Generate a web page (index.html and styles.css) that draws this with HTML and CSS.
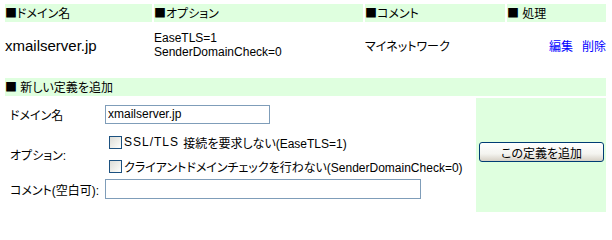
FILE: index.html
```html
<!DOCTYPE html>
<html lang="ja">
<head>
<meta charset="utf-8">
<link rel="stylesheet" href="styles.css">
</head>
<body>
<div class="list">
  <div class="hcell"><span class="sq">■</span>ドメイン名</div>
  <div class="hcell"><span class="sq">■</span>オプション</div>
  <div class="hcell"><span class="sq">■</span>コメント</div>
  <div class="hcell"><span class="sq">■</span> 処理</div>
  <div class="dcell domain">xmailserver.jp</div>
  <div class="dcell opts">EaseTLS=1<br>SenderDomainCheck=0</div>
  <div class="dcell">マイネットワーク</div>
  <div class="dcell actions"><a href="#">編集</a><a href="#">削除</a></div>
</div>
<div class="section"><span class="sq">■</span> 新しい定義を追加</div>
<div class="form">
  <div class="fields">
    <div class="row r1">
      <span class="label">ドメイン名</span>
      <input class="text short" type="text" value="xmailserver.jp">
    </div>
    <div class="row r2">
      <span class="label">オプション:</span>
      <div class="checks">
        <label class="check"><input type="checkbox"><span class="ascii">SSL/TLS </span>接続を要求しない(EaseTLS=1)</label>
        <label class="check"><input type="checkbox">クライアントドメインチェックを行わない(SenderDomainCheck=0)</label>
      </div>
    </div>
    <div class="row r3">
      <span class="label">コメント(空白可):</span>
      <input class="text long" type="text" value="">
    </div>
  </div>
  <div class="submit">
    <button class="btn" type="button">この定義を追加</button>
  </div>
</div>
</body>
</html>
```
FILE: styles.css
```css
body {
  margin: 0;
  padding: 4px 0 0 5px;
  width: 601px;
  font-family: "Liberation Sans", "Noto Sans CJK JP", sans-serif;
  font-size: 12px;
  color: #000;
  background: #fff;
  font-feature-settings: "palt";
}
.sq {
  font-family: "Noto Sans CJK JP", sans-serif;
  font-feature-settings: normal;
}
.list {
  display: grid;
  grid-template-columns: 147px 209px 140px 99px;
  column-gap: 2px;
  row-gap: 2px;
}
.hcell {
  background: #dfffdf;
  height: 18px;
  line-height: 18px;
  white-space: nowrap;
}
.dcell {
  height: 42px;
  display: flex;
  align-items: center;
  white-space: nowrap;
}
.domain { font-size: 15px; }
.opts { line-height: 14px; }
.actions {
  justify-content: flex-end;
  gap: 9px;
}
.actions a {
  color: #0000ff;
  text-decoration: none;
}
.section {
  margin-top: 12px;
  background: #dfffdf;
  height: 18px;
  line-height: 18px;
}
.form {
  margin-top: 2px;
  display: grid;
  grid-template-columns: 469px 130px;
  column-gap: 2px;
}
.fields {
  display: flex;
  flex-direction: column;
  padding-bottom: 12px;
}
.row {
  display: flex;
  align-items: center;
}
.r1 { height: 32px; }
.r2 { height: 48px; }
.r3 { height: 22px; }
.label {
  width: 100px;
  padding-left: 5px;
  box-sizing: border-box;
  white-space: nowrap;
}
.text {
  box-sizing: border-box;
  margin: 0;
  border: 1px solid #7f9db9;
  padding: 0 2px;
  font-family: "Liberation Sans", sans-serif;
  font-size: 12px;
  color: #000;
  background: #fff;
  outline: none;
}
.short { width: 165px; height: 19px; }
.long { width: 316px; height: 20px; }
.checks {
  display: flex;
  flex-direction: column;
  padding-left: 4px;
}
.check {
  height: 24px;
  display: flex;
  align-items: center;
  white-space: nowrap;
}
.ascii {
  letter-spacing: 1px;
  white-space: pre;
}
.check input {
  appearance: none;
  -webkit-appearance: none;
  width: 13px;
  height: 13px;
  margin: 0 2px 0 0;
  box-sizing: border-box;
  border: 1px solid #1c5180;
  background: linear-gradient(135deg, #dcdcd7 0%, #f4f4f0 70%, #ffffff 100%);
}
.submit {
  background: #dfffdf;
  padding-top: 44px;
  padding-left: 3px;
}
.btn {
  box-sizing: border-box;
  width: 125px;
  height: 20px;
  margin: 0;
  padding: 0;
  border: 1px solid #003c74;
  border-radius: 3px;
  background: linear-gradient(180deg, #ffffff 0%, #f4f4f0 60%, #d6d0c5 100%);
  font-family: "Liberation Sans", "Noto Sans CJK JP", sans-serif;
  font-size: 12px;
  color: #000;
  font-feature-settings: "palt";
}
```
